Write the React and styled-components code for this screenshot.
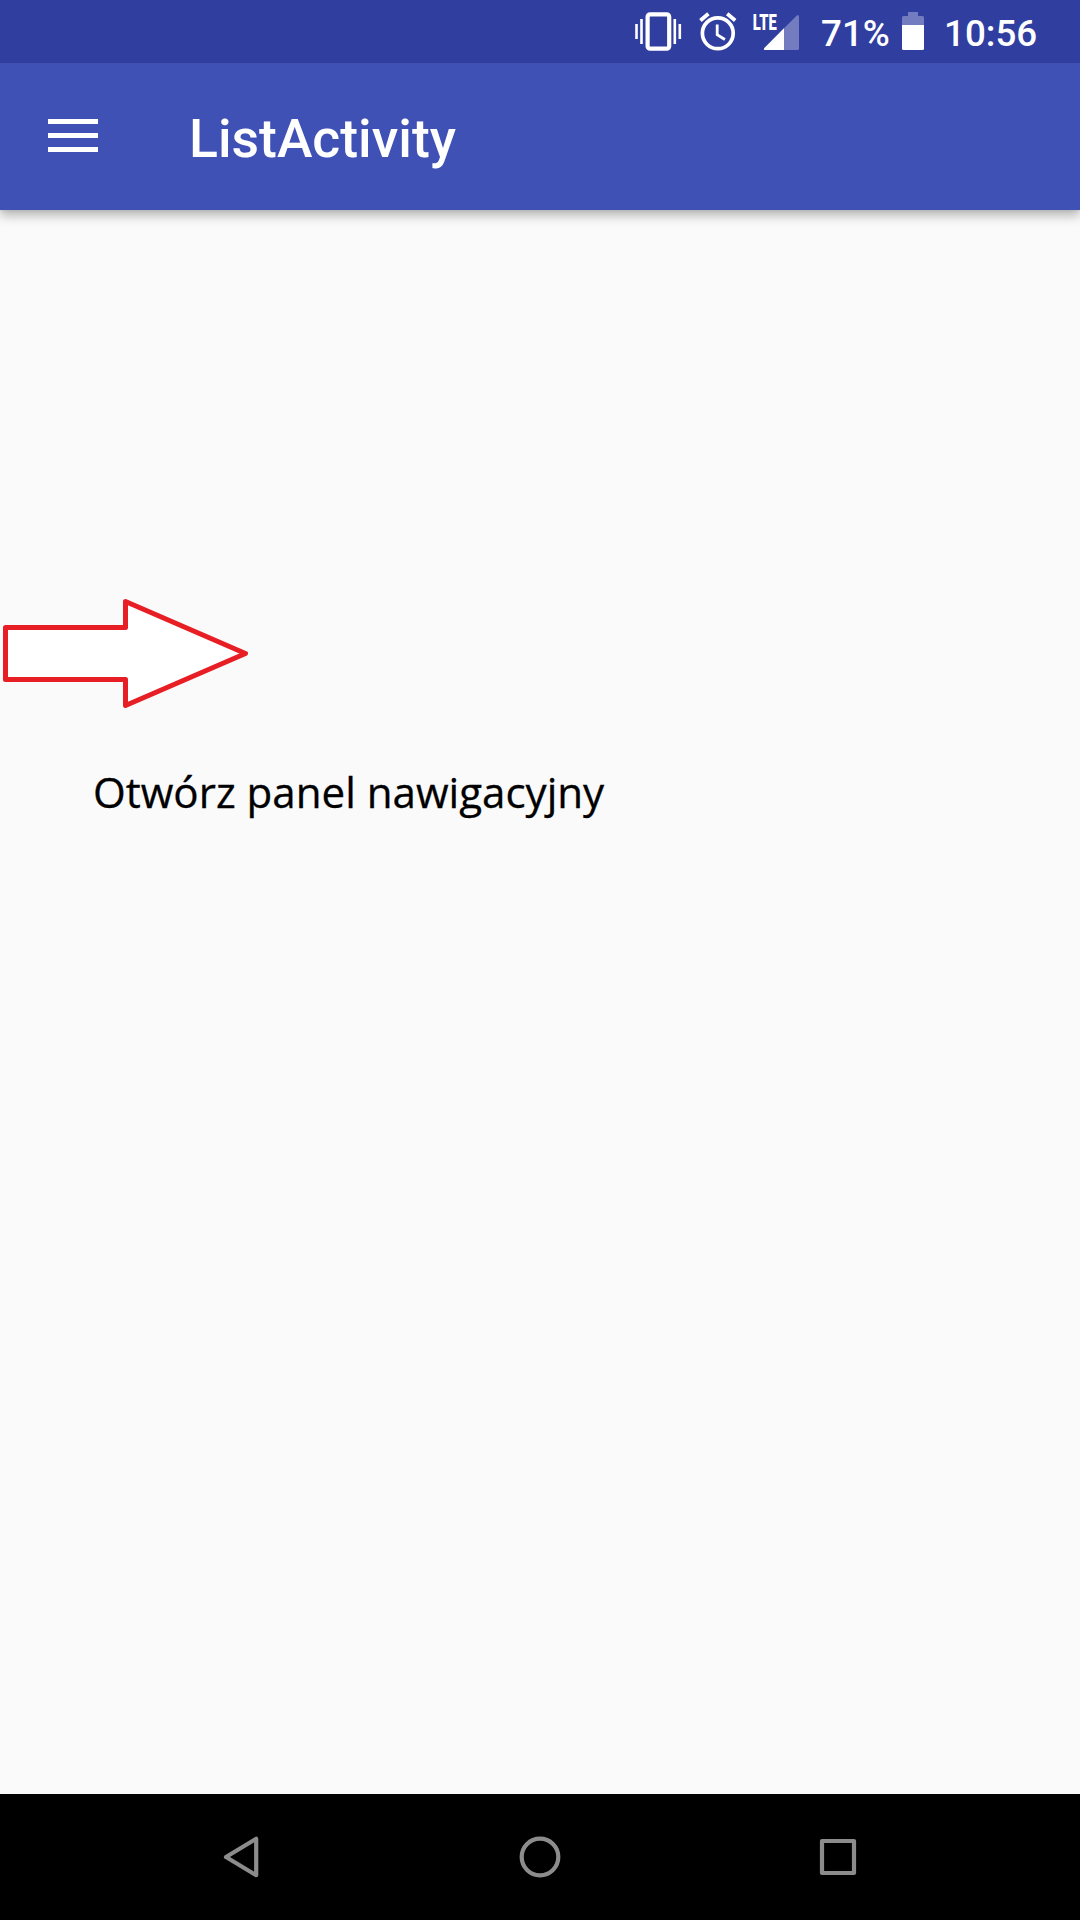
import React from 'react';
import styled, { createGlobalStyle } from 'styled-components';

const GlobalStyle = createGlobalStyle`
  * { box-sizing: border-box; }
  body { margin: 0; background: #fafafa; font-family: Roboto, sans-serif; }
`;

const Screen = styled.div`
  display: flex;
  flex-direction: column;
  width: 1080px;
  height: 1920px;
  overflow: hidden;
  background: #fafafa;
`;

const StatusBar = styled.header`
  position: relative;
  z-index: 1;
  display: flex;
  flex: none;
  align-items: center;
  justify-content: flex-end;
  height: 63px;
  padding-right: 42px;
  background: #303e9f;
  color: #fff;
`;

const StatusIcon = styled.svg`
  display: block;
  flex: none;
  overflow: visible;
  margin-right: ${({ $gap }) => $gap}px;
`;

const StatusText = styled.span`
  width: ${({ $width }) => $width}px;
  margin-right: ${({ $gap = 0 }) => $gap}px;
  padding-top: 3px;
  font-size: 36.75px;
  font-weight: 500;
  line-height: 43px;
  white-space: nowrap;
`;

const AppBar = styled.div`
  position: relative;
  display: flex;
  flex: none;
  align-items: center;
  height: 147px;
  padding-left: 48px;
  background: #3f51b5;
  color: #fff;
  box-shadow: 0 6px 10px rgba(0, 0, 0, 0.26), 0 1px 3px rgba(0, 0, 0, 0.08);
`;

const MenuButton = styled.button`
  display: flex;
  flex-direction: column;
  gap: 9px;
  width: 50px;
  margin: 0 91px 2px 0;
  padding: 0;
  border: 0;
  background: none;
`;

const MenuLine = styled.span`
  height: 5px;
  background: #fff;
`;

const Title = styled.h1`
  margin: 0;
  padding-top: 4px;
  font-size: 53.5px;
  font-weight: 500;
  line-height: 62px;
`;

const Content = styled.main`
  display: flex;
  flex: 1;
  flex-direction: column;
  align-items: flex-start;
  padding-top: 388px;
`;

const Arrow = styled.svg`
  display: block;
  margin-left: 2px;
`;

const Caption = styled.p`
  margin: 52px 0 0 93px;
  color: #000;
  font-family: 'Open Sans', sans-serif;
  font-size: 42.1px;
  line-height: 60px;
  white-space: nowrap;
  -webkit-text-stroke: 0.3px #000;
`;

const NavBar = styled.nav`
  display: flex;
  flex: none;
  align-items: center;
  justify-content: center;
  gap: 256px;
  height: 126px;
  background: #000;
`;

const NavIcon = styled.svg`
  display: block;
  width: 42px;
  height: 42px;
  fill: none;
  stroke: #8c8c8c;
  stroke-width: 4.2;
  stroke-linejoin: round;
`;

export default function App() {
  return (
    <>
      <GlobalStyle />
      <Screen>
        <StatusBar>
          <StatusIcon $gap={17} width="48" height="63" viewBox="0 0 48 63" fill="#fff">
            <rect x="12.6" y="14.3" width="21.6" height="34.4" rx="2.5" fill="none" stroke="#fff" strokeWidth="4.2" />
            <rect x="0.2" y="24" width="2.6" height="15" />
            <rect x="5.2" y="19" width="2.6" height="25" />
            <rect x="38.5" y="19" width="2.6" height="25" />
            <rect x="43.5" y="24" width="2.6" height="15" />
          </StatusIcon>
          <StatusIcon $gap={16} width="36" height="63" viewBox="0 0 36 63" fill="none" stroke="#fff">
            <circle cx="17.8" cy="33.3" r="15.4" strokeWidth="3.7" />
            <path d="M17.2 24.5v10.2l7.7 4.8" strokeWidth="2.8" />
            <path d="M0.4 20.5l8-6.8M27.2 13.7l8 6.8" strokeWidth="3.8" />
          </StatusIcon>
          <StatusIcon $gap={21} width="48" height="63" viewBox="0 0 48 63" fill="#fff">
            <path d="M12.4 48L44.8 15.5Q47 14 47 17V48.5Q47 50 45.5 50H13.2Q11 50 12.4 48Z" opacity="0.32" />
            <path d="M12.4 48L32 28.3V50H13.2Q11 50 12.4 48Z" />
            <text x="0.7" y="30" fontSize="22" fontWeight="900" fontFamily="Roboto, sans-serif" textLength="24" lengthAdjust="spacingAndGlyphs">LTE</text>
          </StatusIcon>
          <StatusText $width={69} $gap={12}>71%</StatusText>
          <StatusIcon $gap={20} width="22" height="63" viewBox="0 0 22 63" fill="#fff">
            <path d="M0 25V17.5Q0 16 1.5 16H6V12H16V16H20.5Q22 16 22 17.5V25Z" opacity="0.32" />
            <path d="M0 25H22V48.5Q22 50 20.5 50H1.5Q0 50 0 48.5Z" />
          </StatusIcon>
          <StatusText $width={94}>10:56</StatusText>
        </StatusBar>
        <AppBar>
          <MenuButton aria-label="Menu">
            <MenuLine />
            <MenuLine />
            <MenuLine />
          </MenuButton>
          <Title>ListActivity</Title>
        </AppBar>
        <Content>
          <Arrow width="250" height="112" viewBox="0 0 250 112">
            <path
              d="M3.5 29.5H123.5V3.5L243.5 55.5L123.5 107.5V81.5H3.5Z"
              fill="#fff"
              stroke="#e81e25"
              strokeWidth="5"
              strokeLinejoin="round"
            />
          </Arrow>
          <Caption>Otwórz panel nawigacyjny</Caption>
        </Content>
        <NavBar>
          <NavIcon viewBox="0 0 42 42">
            <path d="M5 21L35.2 2.8V39.2Z" />
          </NavIcon>
          <NavIcon viewBox="0 0 42 42">
            <circle cx="21" cy="21" r="18.3" />
          </NavIcon>
          <NavIcon viewBox="0 0 42 42">
            <rect x="5" y="5" width="32" height="32" />
          </NavIcon>
        </NavBar>
      </Screen>
    </>
  );
}
